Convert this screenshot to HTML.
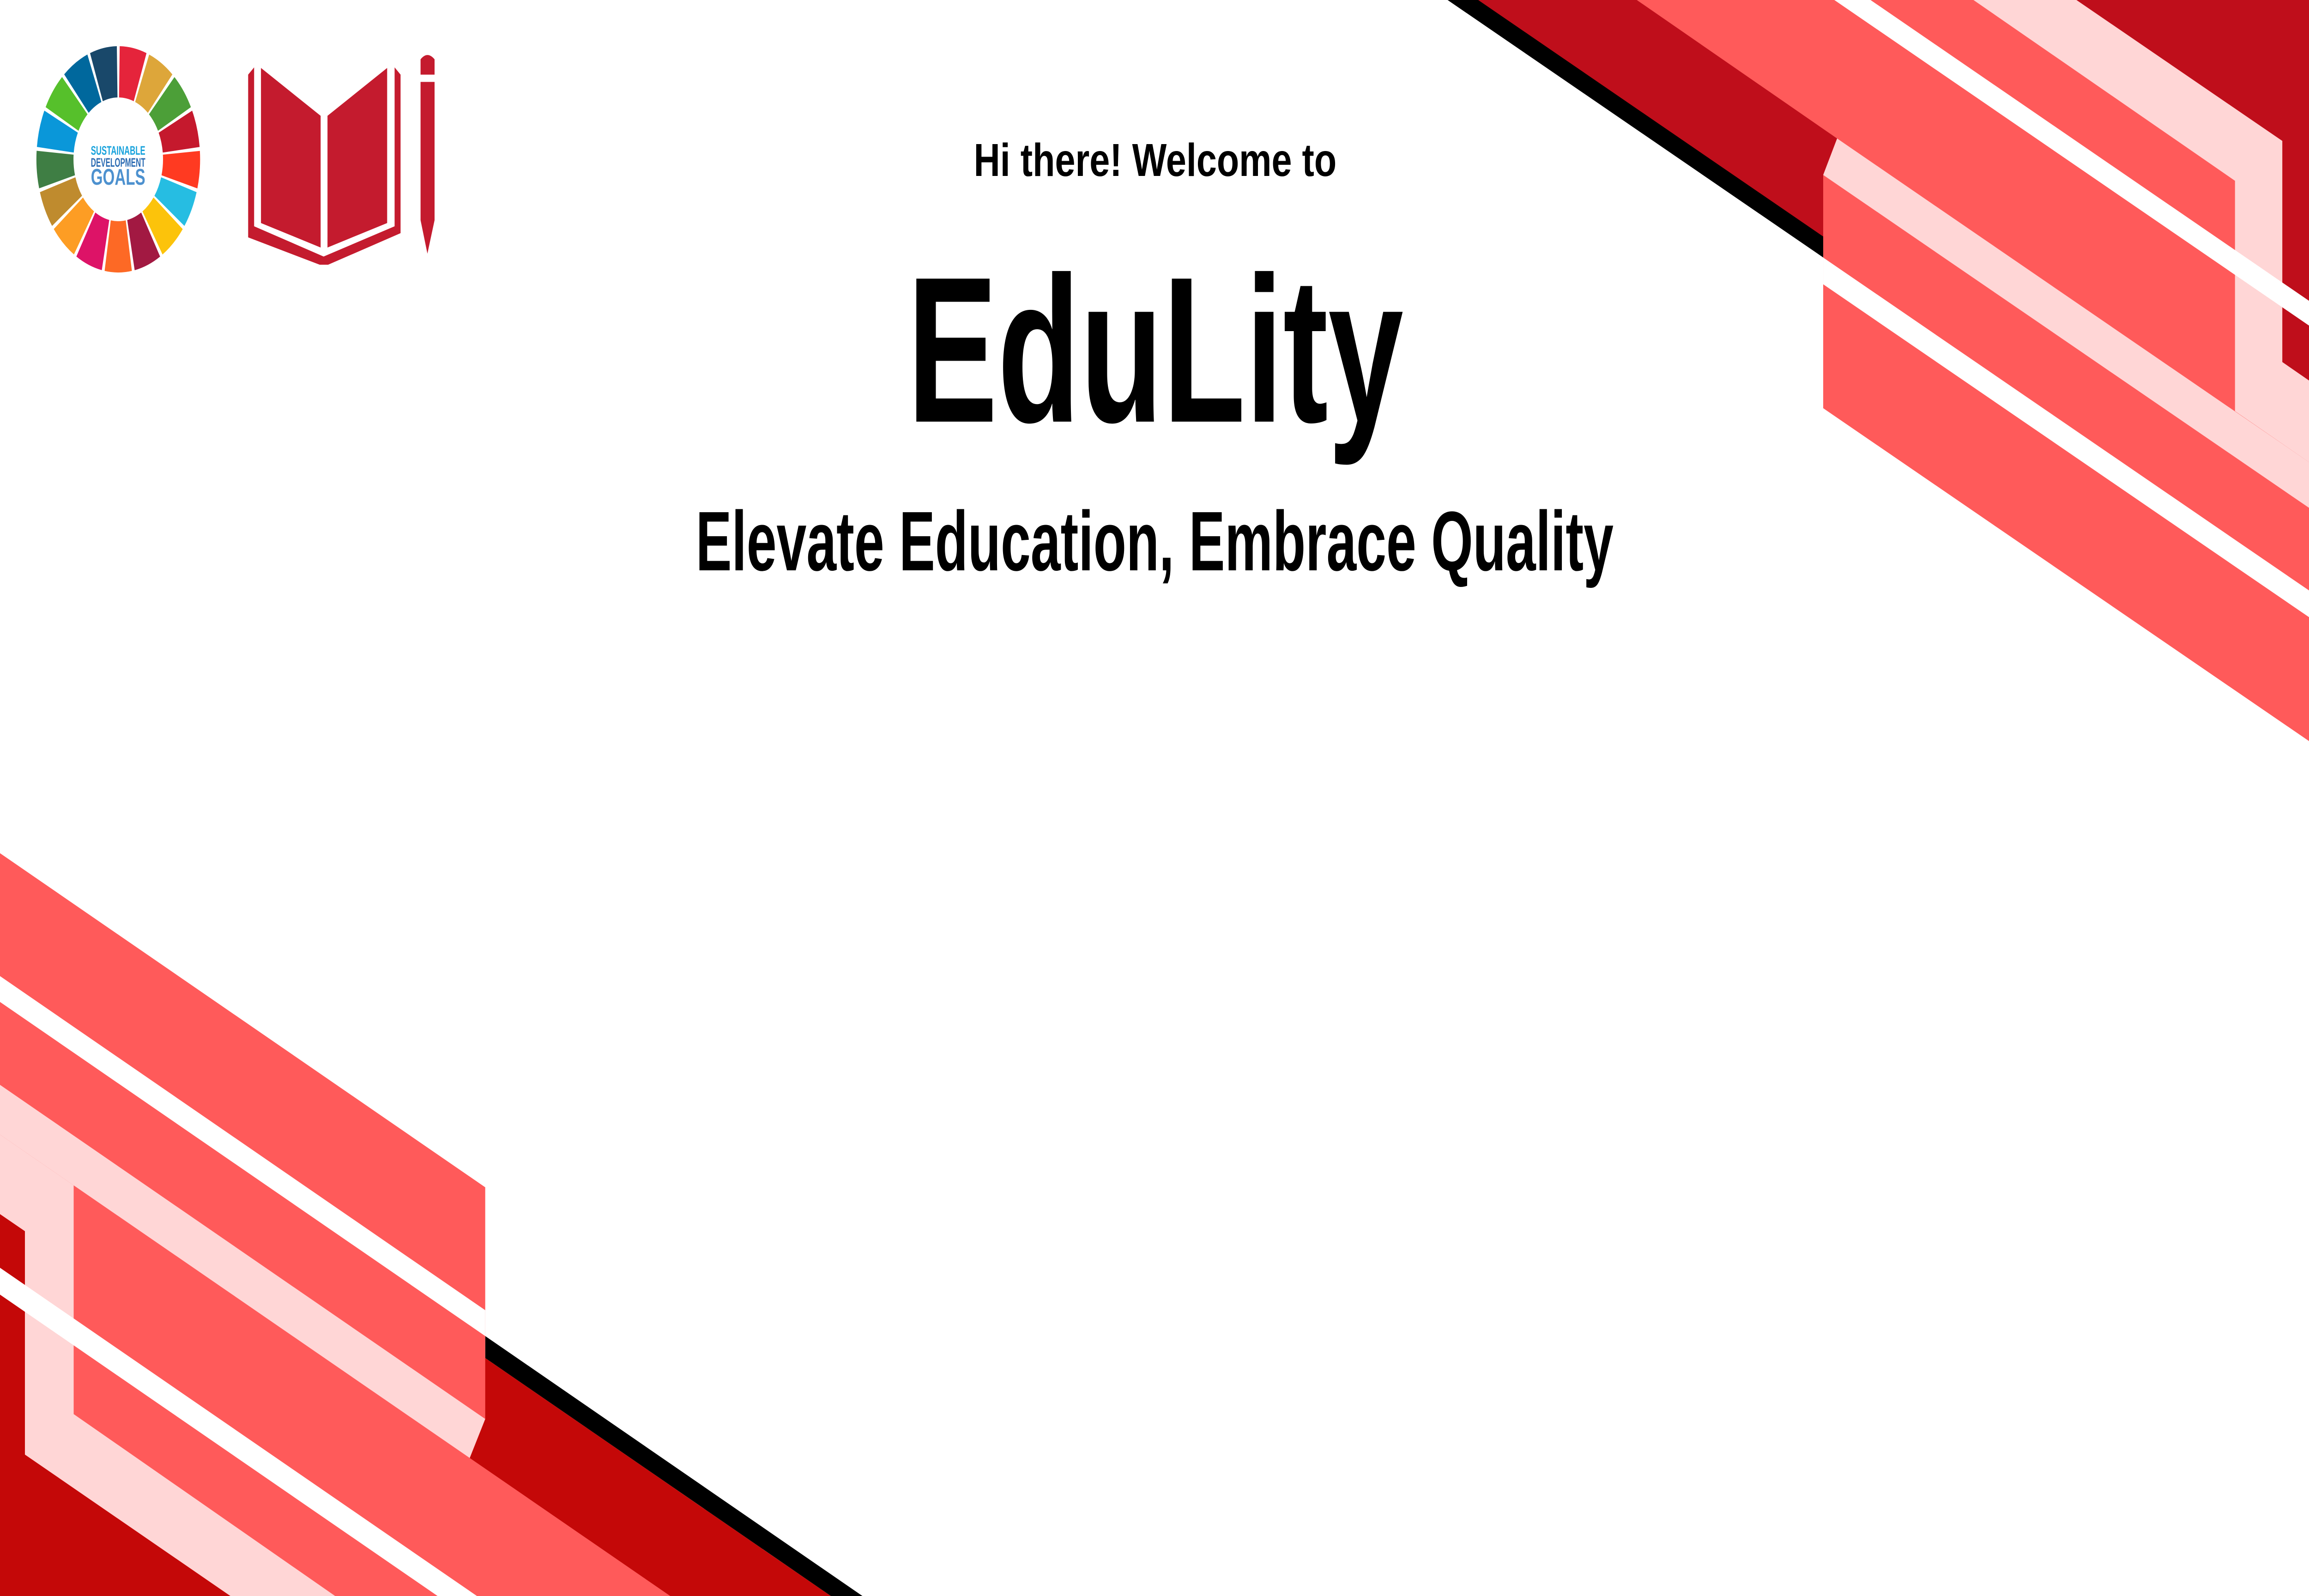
<!DOCTYPE html>
<html><head><meta charset="utf-8"><style>
html,body{margin:0;padding:0;background:#fff;width:100%;height:100%;overflow:hidden;}
svg.main{display:block;position:fixed;left:0;top:0;width:100vw;height:100vh;}
</style></head><body>
<svg class="main" viewBox="0 0 6912 3456" preserveAspectRatio="none" xmlns="http://www.w3.org/2000/svg">
<rect width="6912" height="3456" fill="#fff"/>

<!-- top-right stripes -->
<svg x="4300" y="0" width="2612" height="1650" viewBox="0 0 1568 1568" preserveAspectRatio="none" overflow="hidden">
  <polygon points="20,0 1568,0 1568,1215" fill="#000"/>
  <polygon points="75,0 1568,0 1568,1172" fill="#BF0E1B"/>
  <polygon points="360,0 1568,0 1568,1525 695,840 695,360 720,285" fill="#FF5A5A"/>
  <polygon points="1150,0 1568,0 1568,783 1520,745 1520,290" fill="#BF0E1B"/>
  <polygon points="720,285 1568,951 1568,1045 695,360" fill="#FFD6D6"/>
  <polygon points="965,0 1150,0 1520,290 1520,745 1568,783 1568,951 1435,846 1435,372" fill="#FFD6D6"/>
  <polygon points="715,0 780,0 1568,619 1568,670" fill="#fff"/>
  <polygon points="695,530 1568,1215 1568,1270 695,585" fill="#fff"/>
</svg>

<!-- bottom-left stripes -->
<svg x="0" y="1800" width="2600" height="1656" viewBox="0 0 1568 1568" preserveAspectRatio="none" overflow="hidden">
  <polygon points="0,395 1500,1568 0,1568" fill="#C40808"/>
  <polygon points="876,1035 1557,1568 1500,1568 876,1080" fill="#000"/>
  <polygon points="0,45 876,730 876,1205 848,1285 1210,1568 0,1568" fill="#FF5A5A"/>
  <polygon points="0,785 45,820 45,1278 416,1568 0,1568" fill="#C40808"/>
  <polygon points="0,520 876,1205 848,1285 0,622" fill="#FFD6D6"/>
  <polygon points="0,622 133,726 133,1195 605,1568 416,1568 45,1278 45,820 0,785" fill="#FFD6D6"/>
  <polygon points="0,297 876,982 876,1035 0,350" fill="#fff"/>
  <polygon points="0,895 861,1568 790,1568 0,950" fill="#fff"/>
</svg>

<!-- SDG wheel -->
<g>
  <defs>
    <path id="seg" d="M358.3,100 A245,245 0 0 1 438.6,115 L400.3,219.2 A134,134 0 0 0 356.3,211 Z"/>
  </defs>
  <use href="#seg" fill="#E5243B" transform="rotate(0 354 345)"/>
  <use href="#seg" fill="#DDA63A" transform="rotate(21.18 354 345)"/>
  <use href="#seg" fill="#4C9F38" transform="rotate(42.35 354 345)"/>
  <use href="#seg" fill="#C5192D" transform="rotate(63.53 354 345)"/>
  <use href="#seg" fill="#FF3A21" transform="rotate(84.71 354 345)"/>
  <use href="#seg" fill="#26BDE2" transform="rotate(105.88 354 345)"/>
  <use href="#seg" fill="#FCC30B" transform="rotate(127.06 354 345)"/>
  <use href="#seg" fill="#A21942" transform="rotate(148.24 354 345)"/>
  <use href="#seg" fill="#FD6925" transform="rotate(169.41 354 345)"/>
  <use href="#seg" fill="#DD1367" transform="rotate(190.59 354 345)"/>
  <use href="#seg" fill="#FD9D24" transform="rotate(211.76 354 345)"/>
  <use href="#seg" fill="#BF8B2E" transform="rotate(232.94 354 345)"/>
  <use href="#seg" fill="#3F7E44" transform="rotate(254.12 354 345)"/>
  <use href="#seg" fill="#0A97D9" transform="rotate(275.29 354 345)"/>
  <use href="#seg" fill="#56C02B" transform="rotate(296.47 354 345)"/>
  <use href="#seg" fill="#00689D" transform="rotate(317.65 354 345)"/>
  <use href="#seg" fill="#19486A" transform="rotate(338.82 354 345)"/>
  <text x="272" y="335" font-family="Liberation Sans Narrow, Liberation Sans, sans-serif" font-weight="bold" font-size="27" fill="#17A2DC" textLength="163" lengthAdjust="spacingAndGlyphs">SUSTAINABLE</text>
  <text x="272" y="361" font-family="Liberation Sans Narrow, Liberation Sans, sans-serif" font-weight="bold" font-size="27" fill="#2B6BB2" textLength="163" lengthAdjust="spacingAndGlyphs">DEVELOPMENT</text>
  <text x="272" y="400" font-family="Liberation Sans Narrow, Liberation Sans, sans-serif" font-weight="bold" font-size="49" fill="#4D91CF" textLength="163" lengthAdjust="spacingAndGlyphs">GOALS</text>
</g>

<!-- Book + pencil logo -->
<svg x="0" y="0" width="1400" height="650" viewBox="0 0 1568 1568" preserveAspectRatio="none">
  <polygon points="832,390 852,352 852,1182 1085,1340 1323,1182 1323,352 1343,390 1343,1218 1100,1383 1072,1383 832,1240" fill="#C41B2E"/>
  <polygon points="875,355 1075,605 1075,1293 875,1165" fill="#C41B2E"/>
  <polygon points="1298,355 1098,605 1098,1293 1298,1165" fill="#C41B2E"/>
  <path d="M1410,390 L1410,310 Q1433,265 1457,310 L1457,390 Z" fill="#C41B2E"/>
  <path d="M1410,428 L1457,428 L1457,1150 L1433,1325 L1410,1150 Z" fill="#C41B2E"/>
</svg>

<!-- Text -->
<text x="2915" y="381" font-family="Liberation Sans, sans-serif" font-weight="bold" font-size="100" fill="#000" textLength="1086" lengthAdjust="spacingAndGlyphs">Hi there! Welcome to</text>
<text x="2716" y="913" font-family="Liberation Sans, sans-serif" font-weight="bold" font-size="450" fill="#000" textLength="1485" lengthAdjust="spacingAndGlyphs">EduLity</text>
<text x="2083" y="1235" font-family="Liberation Sans, sans-serif" font-weight="bold" font-size="183" fill="#000" textLength="2747" lengthAdjust="spacingAndGlyphs">Elevate Education, Embrace Quality</text>
</svg>
</body></html>
